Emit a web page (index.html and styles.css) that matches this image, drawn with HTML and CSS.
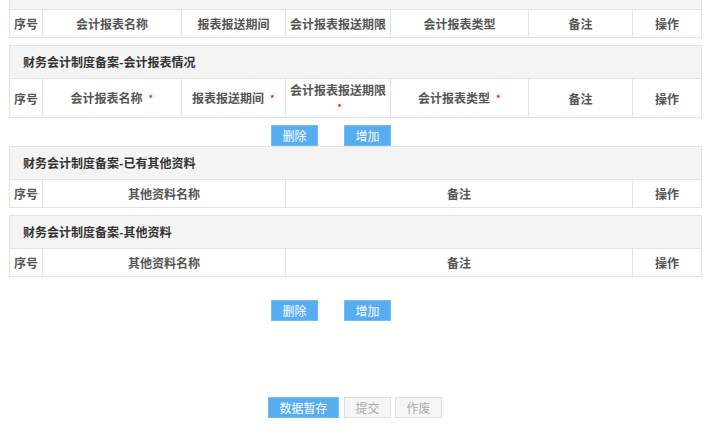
FILE: index.html
```html
<!DOCTYPE html>
<html lang="zh">
<head>
<meta charset="utf-8">
<link rel="stylesheet" href="styles.css">
</head>
<body>
<div class="page">
  <div class="sec sec-cut cols7">
    <div class="title"></div>
    <div class="th"><span>序号</span></div>
    <div class="th"><span>会计报表名称</span></div>
    <div class="th"><span>报表报送期间</span></div>
    <div class="th"><span>会计报表报送期限</span></div>
    <div class="th"><span>会计报表类型</span></div>
    <div class="th"><span>备注</span></div>
    <div class="th"><span>操作</span></div>
  </div>

  <div class="sec cols7 tall">
    <div class="title">财务会计制度备案-会计报表情况</div>
    <div class="th"><span>序号</span></div>
    <div class="th"><span>会计报表名称 <em class="req">*</em></span></div>
    <div class="th"><span>报表报送期间 <em class="req">*</em></span></div>
    <div class="th"><span>会计报表报送期限 <em class="req">*</em></span></div>
    <div class="th"><span>会计报表类型 <em class="req">*</em></span></div>
    <div class="th"><span>备注</span></div>
    <div class="th"><span>操作</span></div>
  </div>

  <div class="btns btns-a">
    <button class="btn">删除</button>
    <button class="btn">增加</button>
  </div>

  <div class="sec cols4">
    <div class="title">财务会计制度备案-已有其他资料</div>
    <div class="th"><span>序号</span></div>
    <div class="th"><span>其他资料名称</span></div>
    <div class="th"><span>备注</span></div>
    <div class="th"><span>操作</span></div>
  </div>

  <div class="sec cols4">
    <div class="title">财务会计制度备案-其他资料</div>
    <div class="th"><span>序号</span></div>
    <div class="th"><span>其他资料名称</span></div>
    <div class="th"><span>备注</span></div>
    <div class="th"><span>操作</span></div>
  </div>

  <div class="btns btns-b">
    <button class="btn">删除</button>
    <button class="btn">增加</button>
  </div>

  <div class="footer">
    <button class="btn btn-wide">数据暂存</button>
    <button class="btn btn-off">提交</button>
    <button class="btn btn-off">作废</button>
  </div>
</div>
</body>
</html>
```
FILE: styles.css
```css
html, body {
  margin: 0;
  padding: 0;
  background: #ffffff;
}
body {
  font-family: "Noto Sans CJK SC", "Microsoft YaHei", sans-serif;
  font-size: 12px;
  color: #333;
  overflow: hidden;
}
.page {
  width: 693px;
  margin-left: 9px;
}
.sec {
  display: grid;
  gap: 1px;
  background: #e3e3e3;
  border: 1px solid #e3e3e3;
}
.cols7 {
  grid-template-columns: 32px 138px 103px 104px 137px 103px 68px;
}
.cols4 {
  grid-template-columns: 32px 242px 346px 68px;
}
.sec-cut {
  margin-top: -24px;
}
.sec + .sec {
  margin-top: 7px;
}
.title {
  grid-column: 1 / -1;
  background: #f4f4f4;
  height: 32px;
  line-height: 32px;
  padding-left: 13px;
  font-weight: bold;
  color: #333;
  font-size: 12px;
}
.th {
  background: #fff;
  height: 27px;
  display: flex;
  align-items: center;
  justify-content: center;
  text-align: center;
  font-weight: bold;
  color: #555;
  line-height: 17px;
  padding: 0 3px;
}
.th span {
  display: block;
}
.tall .th {
  height: 38px;
}
.req {
  color: #f00;
  font-style: normal;
  font-weight: normal;
  font-size: 11px;
  margin-left: 3px;
}
.btns {
  display: flex;
  gap: 26px;
  padding-left: 262px;
}
.btns-a {
  margin-top: 7px;
}
.btns-b {
  margin-top: 23px;
}
.btn {
  width: 47px;
  height: 21px;
  padding: 0;
  margin: 0;
  border: 1px solid #74bdf4;
  background: #56adf0;
  color: #fff;
  font-family: "Noto Sans CJK SC", "Microsoft YaHei", sans-serif;
  font-size: 12px;
  line-height: 19px;
}
.footer {
  display: flex;
  gap: 5px;
  padding-left: 259px;
  margin-top: 76px;
}
.btn-wide {
  width: 71px;
}
.btn-off {
  background: #f6f6f6;
  border: 1px solid #dedede;
  color: #aaa;
}
.btn-off + .btn-off {
  margin-left: -1px;
}
```
